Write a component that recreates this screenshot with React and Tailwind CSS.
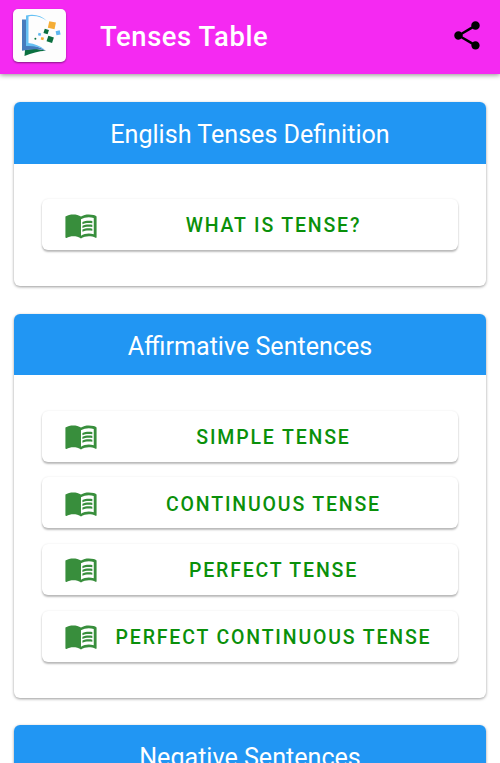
import React from "react";
import { MdMenuBook, MdShare } from "react-icons/md";

const sections = [
  { title: "English Tenses Definition", items: ["What is tense?"] },
  {
    title: "Affirmative Sentences",
    items: [
      "Simple tense",
      "Continuous tense",
      "Perfect tense",
      "Perfect continuous tense",
    ],
  },
  { title: "Negative Sentences", items: ["Simple tense"] },
];

export default function App() {
  return (
    <div className="h-screen overflow-hidden bg-white font-['Roboto',sans-serif]">

      {/* APP BAR */}
      <header className="flex h-[74px] items-center bg-[#f529f2] pl-[12.5px] pr-4 shadow-[0_1px_5px_rgba(0,0,0,0.45)]">
        <AppLogo />
        <h1 className="ml-[34.5px] flex-1 pt-[2px] text-[27.4px] font-medium tracking-[0.6px] text-white">
          Tenses Table
        </h1>
        <MdShare className="size-[34px] -translate-y-[1.5px] text-black" />
      </header>

      {/* SECTIONS */}
      <main className="flex flex-col gap-[27.6px] px-3.5 pt-7">
        {sections.map((section) => (
          <SectionCard key={section.title} {...section} />
        ))}
      </main>
    </div>
  );
}

/* SECTION CARD COMPONENT */
function SectionCard({ title, items }) {
  return (
    <section className="overflow-hidden rounded-[6px] bg-white shadow-[0_1px_3px_rgba(0,0,0,0.4)]">
      <h2 className="flex h-[61.5px] items-center justify-center bg-[#2196f3] pt-[4.5px] text-[25.1px] font-normal text-white">
        {title}
      </h2>
      <div className="flex flex-col gap-[15.7px] px-7 pb-9 pt-[35.5px]">
        {items.map((item) => (
          <TenseButton key={item} label={item} />
        ))}
      </div>
    </section>
  );
}

/* BUTTON COMPONENT */
function TenseButton({ label }) {
  return (
    <button className="flex h-[51px] w-full items-center rounded-[6px] bg-white pl-[21.5px] pr-[22px] text-[#0a900a] shadow-[0_2px_2px_rgba(0,0,0,0.26),0_0_2px_rgba(0,0,0,0.1)]">
      <MdMenuBook className="size-[34px] shrink-0 text-[#388e3c]" />
      <span className="ml-[13.5px] flex-1 whitespace-nowrap pt-[3px] text-center text-[19.5px] font-medium uppercase tracking-[1.83px]">
        {label}
      </span>
    </button>
  );
}

/* LOGO */
function AppLogo() {
  return (
    <div className="mb-[3px] size-[53px] rounded-[5px] bg-[#fdfdfd] shadow-[0_1px_2px_rgba(0,0,0,0.45)]">
      <svg viewBox="0 0 53 53" className="size-full">
        <path d="M12 41 C19 39.5 26 40 33 41.7 C25 42 19 44 11.5 47Z" fill="#0b7040" />
        <path d="M9 10.5 H13.5 V35.5 C21 36 27 38 33 41.7 C25 39.5 17 40 9 41.7Z" fill="#467bbd" />
        <path d="M13 6.5 C21 4.5 28.5 6.5 34 12 C28 7.5 22 6.3 15.5 7.5 V34 C21.5 34.5 27 37 31.5 40.5 C25.5 37.5 19 36.5 13 37Z" fill="#66c1f4" />
        <rect x="35.5" y="12.8" width="6.8" height="6.8" fill="#f5ad35" transform="rotate(12 38.9 16.2)" />
        <rect x="31" y="20.3" width="4.4" height="4.4" fill="#0b7040" transform="rotate(18 33.2 22.5)" />
        <rect x="43" y="21.7" width="4.2" height="4.2" fill="#5eb7f0" transform="rotate(-12 45.1 23.8)" />
        <rect x="34.3" y="27.4" width="5.8" height="5.8" fill="#0b7040" transform="rotate(18 37.2 30.3)" />
        <rect x="25.2" y="24" width="2.7" height="2.7" fill="#5eb7f0" transform="rotate(15 26.5 25.3)" />
        <rect x="28" y="28.3" width="2.7" height="2.7" fill="#f5ad35" transform="rotate(15 29.3 29.6)" />
        <circle cx="22.4" cy="29.7" r="1" fill="#0b7040" />
      </svg>
    </div>
  );
}
